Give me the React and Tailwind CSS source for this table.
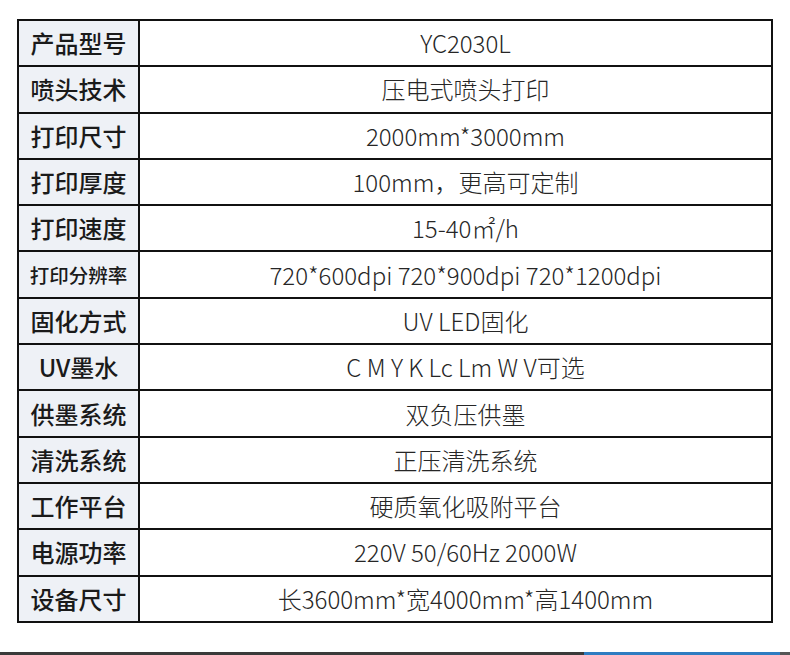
const rows = [
  ["产品型号", "YC2030L"],
  ["喷头技术", "压电式喷头打印"],
  ["打印尺寸", "2000mm*3000mm"],
  ["打印厚度", "100mm，更高可定制"],
  ["打印速度", "15-40㎡/h"],
  ["打印分辨率", "720*600dpi 720*900dpi 720*1200dpi", true],
  ["固化方式", "UV LED固化"],
  ["UV墨水", "C M Y K Lc Lm W V可选"],
  ["供墨系统", "双负压供墨"],
  ["清洗系统", "正压清洗系统"],
  ["工作平台", "硬质氧化吸附平台"],
  ["电源功率", "220V 50/60Hz 2000W"],
  ["设备尺寸", "长3600mm*宽4000mm*高1400mm"],
];

export default function App() {
  return (
    <div
      className="w-[790px] h-[655px] bg-white overflow-hidden flex flex-col"
      style={{ fontFamily: '"Noto Sans CJK SC", "Noto Sans", sans-serif' }}
    >
      <div className="pt-[19px] pl-[17px]">
        <table className="w-[756px] border-collapse">
          <tbody>
            {rows.map(([label, value, small]) => (
              <tr key={label} className="h-[46.3px]">
                <td
                  className={`w-[121px] p-0 border-2 border-[#111] bg-[#eef1f6] text-center font-medium text-[#1a1a1a] ${
                    small ? "text-[19.5px]" : "text-[24px]"
                  }`}
                >
                  {label}
                </td>
                <td className="py-0 pl-[20px] pr-0 border-2 border-[#111] text-center text-[24px] font-light text-[#262626]">
                  {value}
                </td>
              </tr>
            ))}
          </tbody>
        </table>
      </div>
      <div className="mt-auto flex h-[3px]">
        <div className="flex-1 bg-[#3a3a3a]" />
        <div className="w-[196px] bg-[#2f7cc1]" />
        <div className="w-[10px] bg-[#555]" />
      </div>
    </div>
  );
}
